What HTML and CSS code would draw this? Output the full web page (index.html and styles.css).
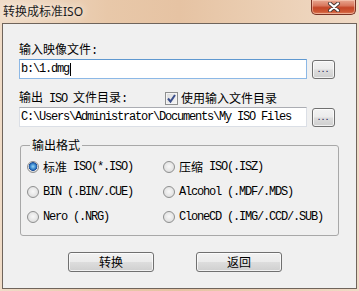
FILE: index.html
```html
<!DOCTYPE html>
<html lang="zh-CN">
<head>
<meta charset="utf-8">
<title>转换成标准ISO</title>
<link rel="stylesheet" href="styles.css">
</head>
<body>
<div class="window">
  <div class="titlebar">
    <span class="title">转换成标准<span class="tl">ISO</span></span>
    <div class="close">
      <svg width="16" height="10" viewBox="0 0 16 10">
        <path d="M4 1.5 L12 8.5 M12 1.5 L4 8.5" stroke="#4a3a36" stroke-width="4" stroke-linecap="round"/>
        <path d="M4 1.5 L12 8.5 M12 1.5 L4 8.5" stroke="#ffffff" stroke-width="2.2" stroke-linecap="round"/>
      </svg>
    </div>
  </div>
  <div class="client">
    <div class="label l1">输入映像文件<span class="en">:</span></div>
    <div class="row">
      <div class="field focus"><span class="en">b:\1.dmg</span><span class="caret"></span></div>
      <div class="browse"><span class="dots">...</span></div>
    </div>
    <div class="labelrow">
      <span class="label">输出<span class="en"> ISO </span>文件目录<span class="en">:</span></span>
      <span class="check">
        <span class="box"><svg width="11" height="11" viewBox="0 0 11 11"><path d="M2 5.5 L4.5 8.5 L9 2" stroke="#3b4f8c" stroke-width="2" fill="none"/></svg></span>
        <span class="label">使用输入文件目录</span>
      </span>
    </div>
    <div class="row r2">
      <div class="field"><span class="en">C:\Users\Administrator\Documents\My ISO Files</span></div>
      <div class="browse"><span class="dots">...</span></div>
    </div>
    <fieldset class="group">
      <legend>输出格式</legend>
      <div class="grid">
        <div class="opt"><span class="radio on"></span>标准<span class="en"> ISO(*.ISO)</span></div>
        <div class="opt"><span class="radio"></span>压缩<span class="en"> ISO(.ISZ)</span></div>
        <div class="opt"><span class="radio"></span><span class="en">BIN (.BIN/.CUE)</span></div>
        <div class="opt"><span class="radio"></span><span class="en">Alcohol (.MDF/.MDS)</span></div>
        <div class="opt"><span class="radio"></span><span class="en">Nero (.NRG)</span></div>
        <div class="opt"><span class="radio"></span><span class="en">CloneCD (.IMG/.CCD/.SUB)</span></div>
      </div>
    </fieldset>
    <div class="buttons">
      <div class="btn">转换</div>
      <div class="btn">返回</div>
    </div>
  </div>
</div>
</body>
</html>
```
FILE: styles.css
```css
html, body {
  margin: 0;
  padding: 0;
  width: 359px;
  height: 291px;
  overflow: hidden;
  background: #ffffff;
}
.window {
  width: 359px;
  height: 291px;
  box-sizing: border-box;
  display: flex;
  flex-direction: column;
  padding: 0 2px 2px 2px;
  background: linear-gradient(to right, #f0dcc8 0%, #e8c8a9 30%, #e6c3a3 50%, #ebcfb4 75%, #f0dac6 100%);
  font-family: "Noto Sans CJK SC", sans-serif;
  font-size: 12px;
  color: #000;
}
.titlebar {
  height: 23px;
  display: flex;
  align-items: flex-start;
  flex-shrink: 0;
}
.title {
  margin: 3px 0 0 1px;
  line-height: 16px;
  font-size: 12px;
  color: #1a1a1a;
  text-shadow: 0 0 6px #f8eee4, 0 0 10px #f8eee4;
}
.tl {
  font-family: "Noto Sans", sans-serif;
}
.close {
  margin-left: auto;
  margin-right: 1px;
  width: 45px;
  height: 15px;
  box-sizing: border-box;
  border: 1px solid #7a3224;
  border-top: none;
  border-radius: 0 0 5px 5px;
  background: linear-gradient(to bottom, #e8a892 0%, #d9785e 40%, #c44628 55%, #cf5a36 85%, #e08a6a 100%);
  box-shadow: inset 0 0 0 1px rgba(255, 220, 200, 0.5);
  display: flex;
  align-items: center;
  justify-content: center;
}
.client {
  flex: 1;
  border: 1px solid #6f645b;
  background: #f0f0f0;
  padding: 18px 0 0 16px;
  display: flex;
  flex-direction: column;
  align-items: flex-start;
}
.en {
  font-family: "Liberation Mono", monospace;
  font-size: 12px;
  letter-spacing: -1.2px;
  white-space: pre;
}
.label {
  line-height: 14px;
  white-space: nowrap;
}
.l1 {
  margin-bottom: 1px;
}
.row {
  display: flex;
  align-items: center;
  gap: 5px;
}
.r2 {
  margin-top: 2px;
}
.field {
  width: 288px;
  height: 20px;
  box-sizing: border-box;
  border: 1px solid #dbdfe6;
  border-top-color: #abadb3;
  background: #ffffff;
  padding: 0 1px;
  display: flex;
  align-items: center;
  line-height: 14px;
}
.field.focus {
  border-color: #8cb8e6;
  border-top-color: #5f98d0;
}
.caret {
  width: 1px;
  height: 13px;
  background: #000;
  margin-left: 1px;
}
.browse {
  width: 23px;
  height: 19px;
  box-sizing: border-box;
  border: 1px solid #707070;
  border-radius: 3px;
  background: linear-gradient(to bottom, #f3f3f3 0%, #ebebeb 48%, #dddddd 52%, #cfcfcf 100%);
  box-shadow: inset 0 0 0 1px rgba(255, 255, 255, 0.7);
  display: flex;
  justify-content: center;
  align-items: flex-end;
}
.dots {
  font-family: "Liberation Sans", sans-serif;
  font-size: 11px;
  line-height: 11px;
  letter-spacing: 1px;
  color: #202050;
  margin-bottom: 4px;
}
.labelrow {
  margin-top: 12px;
  display: flex;
  align-items: center;
  height: 14px;
}
.check {
  margin-left: 38px;
  display: flex;
  align-items: center;
  gap: 3px;
}
.box {
  width: 13px;
  height: 13px;
  box-sizing: border-box;
  border: 1px solid #8e8f8f;
  background: linear-gradient(135deg, #dcdcdc 0%, #f6f6f6 100%);
  box-shadow: inset 0 0 0 1px #f4f4f4;
  display: flex;
  align-items: center;
  justify-content: center;
}
.box svg {
  display: block;
}
.group {
  margin: 11px 0 0 1px;
  padding: 0 0 9px 6px;
  width: 319px;
  box-sizing: border-box;
  border: 1px solid #a8a8a8;
  border-radius: 3px;
  min-width: 0;
}
.group legend {
  margin-left: 3px;
  padding: 0 2px;
  line-height: 14px;
}
.grid {
  display: grid;
  grid-template-columns: 136px auto;
  grid-auto-rows: 18px;
  row-gap: 7px;
  padding-top: 6px;
}
.opt {
  display: flex;
  align-items: center;
  line-height: 14px;
  white-space: nowrap;
}
.radio {
  width: 12px;
  height: 12px;
  box-sizing: border-box;
  border-radius: 50%;
  border: 1px solid #8e8f8f;
  background: radial-gradient(circle at 50% 45%, #f8f8f8 0%, #e4e4e4 60%, #cfcfcf 100%);
  margin-right: 4px;
  flex-shrink: 0;
}
.radio.on {
  background: radial-gradient(circle at 50% 45%, #9ad6f4 0%, #3a8ad0 35%, #1d4f9a 55%, #e2e2e2 62%, #d0d0d0 100%);
}
.buttons {
  margin: 16px 0 0 49px;
  display: flex;
  gap: 42px;
}
.btn {
  width: 86px;
  height: 20px;
  box-sizing: border-box;
  border: 1px solid #707070;
  border-radius: 3px;
  background: linear-gradient(to bottom, #f2f2f2 0%, #ebebeb 48%, #dddddd 52%, #cfcfcf 100%);
  box-shadow: inset 0 0 0 1px rgba(255, 255, 255, 0.7);
  display: flex;
  align-items: center;
  justify-content: center;
  line-height: 14px;
}
```
